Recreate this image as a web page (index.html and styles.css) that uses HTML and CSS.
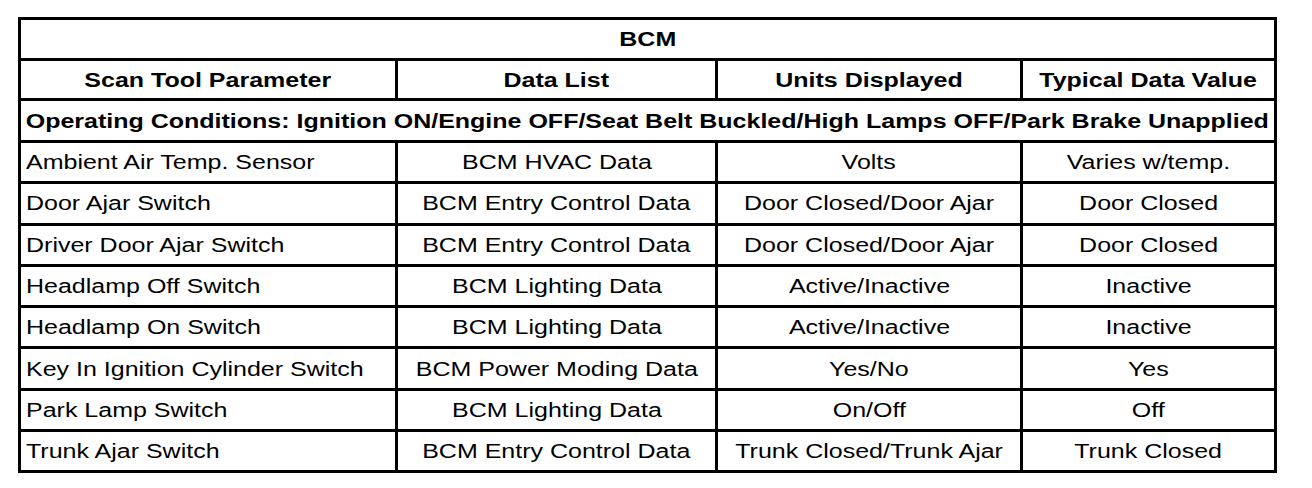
FILE: index.html
```html
<!DOCTYPE html>
<html>
<head>
<meta charset="utf-8">
<link rel="stylesheet" href="styles.css">
</head>
<body>
<table class="bcm">
  <colgroup>
    <col class="c1"><col class="c2"><col class="c3"><col class="c4">
  </colgroup>
  <tr class="title"><th colspan="4"><span>BCM</span></th></tr>
  <tr class="head">
    <th><span>Scan Tool Parameter</span></th>
    <th><span>Data List</span></th>
    <th><span>Units Displayed</span></th>
    <th><span>Typical Data Value</span></th>
  </tr>
  <tr class="cond"><th colspan="4"><span>Operating Conditions: Ignition ON/Engine OFF/Seat Belt Buckled/High Lamps OFF/Park Brake Unapplied</span></th></tr>
  <tr><td><span>Ambient Air Temp. Sensor</span></td><td><span>BCM HVAC Data</span></td><td><span>Volts</span></td><td><span>Varies w/temp.</span></td></tr>
  <tr><td><span>Door Ajar Switch</span></td><td><span>BCM Entry Control Data</span></td><td><span>Door Closed/Door Ajar</span></td><td><span>Door Closed</span></td></tr>
  <tr><td><span>Driver Door Ajar Switch</span></td><td><span>BCM Entry Control Data</span></td><td><span>Door Closed/Door Ajar</span></td><td><span>Door Closed</span></td></tr>
  <tr><td><span>Headlamp Off Switch</span></td><td><span>BCM Lighting Data</span></td><td><span>Active/Inactive</span></td><td><span>Inactive</span></td></tr>
  <tr><td><span>Headlamp On Switch</span></td><td><span>BCM Lighting Data</span></td><td><span>Active/Inactive</span></td><td><span>Inactive</span></td></tr>
  <tr><td><span>Key In Ignition Cylinder Switch</span></td><td><span>BCM Power Moding Data</span></td><td><span>Yes/No</span></td><td><span>Yes</span></td></tr>
  <tr><td><span>Park Lamp Switch</span></td><td><span>BCM Lighting Data</span></td><td><span>On/Off</span></td><td><span>Off</span></td></tr>
  <tr><td><span>Trunk Ajar Switch</span></td><td><span>BCM Entry Control Data</span></td><td><span>Trunk Closed/Trunk Ajar</span></td><td><span>Trunk Closed</span></td></tr>
</table>
</body>
</html>
```
FILE: styles.css
```css
html, body {
  margin: 0;
  padding: 0;
  background: #fff;
}
body {
  padding: 17px 0 0 18px;
  font-family: "Liberation Sans", Arial, sans-serif;
  color: #000;
}
.bcm {
  border-collapse: collapse;
  table-layout: fixed;
  width: 1256px;
  font-size: 20px;
}
.c1 { width: 377px; }
.c2 { width: 320px; }
.c3 { width: 305px; }
.c4 { width: 254px; }
.bcm th, .bcm td {
  border: 3px solid #000;
  padding: 0 4px;
  box-sizing: border-box;
  white-space: nowrap;
  text-align: center;
  vertical-align: middle;
  line-height: 22px;
}
.bcm th span, .bcm td span {
  display: inline-block;
  transform: scaleX(1.25);
  transform-origin: center;
}
.bcm th { font-weight: bold; }
.bcm td:first-child { text-align: left; padding-left: 5px; }
.bcm td:first-child span { transform-origin: left center; }
.title th { height: 41px; }
.head th { height: 40px; }
.cond th { height: 42px; padding: 0; }
.bcm tr td { height: 41.3px; }
```
